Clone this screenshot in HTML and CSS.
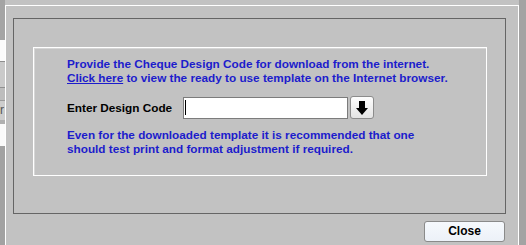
FILE: index.html
```html
<!DOCTYPE html>
<html>
<head>
<meta charset="utf-8">
<link rel="stylesheet" href="styles.css">
</head>
<body>
<div class="screen">
  <div class="side-left">
    <div class="sl sl-a"></div>
    <div class="sl sl-b"></div>
    <div class="sl sl-c"></div>
    <div class="sl sl-d"></div>
    <div class="sl sl-e"><span class="cut">r</span></div>
    <div class="sl sl-f"></div>
    <div class="sl sl-g"></div>
    <div class="sl sl-h"></div>
  </div>
  <div class="dialog-wrap">
    <div class="dialog">
      <div class="frame">
        <div class="panel">
          <div class="info">Provide the Cheque Design Code for download from the internet.<br><a class="link">Click here</a> to view the ready to use template on the Internet browser.</div>
          <div class="row">
            <span class="label">Enter Design Code</span>
            <div class="input"><span class="caret"></span></div>
            <button class="dl" type="button">
              <svg width="12" height="15" viewBox="0 0 12 15"><rect x="3" y="0" width="6" height="8" fill="#000"/><polygon points="0,7 12,7 6,14" fill="#000"/></svg>
            </button>
          </div>
          <div class="info info2">Even for the downloaded template it is recommended that one<br>should test print and format adjustment if required.</div>
        </div>
      </div>
      <div class="footer"><button class="close" type="button">Close</button></div>
    </div>
  </div>
  <div class="side-right"></div>
</div>
</body>
</html>
```
FILE: styles.css
```css
html, body {
  margin: 0;
  padding: 0;
  background: #c2c2c2;
}
.screen {
  display: flex;
  width: 526px;
  height: 245px;
  overflow: hidden;
  font-family: "Liberation Sans", Arial, sans-serif;
  font-weight: bold;
  font-size: 11.75px;
}
.side-left {
  width: 5px;
  display: flex;
  flex-direction: column;
  overflow: hidden;
}
.sl { width: 5px; }
.sl-a { height: 40px; background: #a4a4a4; }
.sl-b { height: 21px; background: #fbfbfb; }
.sl-c { height: 26px; background: #cacaca; border-top: 1px solid #8e8e8e; box-sizing: border-box; }
.sl-d { height: 13px; background: #bdbdbd; border-top: 1px solid #909090; box-sizing: border-box; }
.sl-e { height: 20px; background: #cdcdcd; border-top: 1px solid #9a9a9a; box-sizing: border-box; position: relative; }
.cut {
  position: absolute;
  right: 1px;
  top: 2px;
  font-weight: normal;
  font-size: 12px;
  color: #555;
  line-height: 14px;
}
.sl-f { height: 4px; background: #b0b0b0; }
.sl-g { height: 22px; background: #fafafa; }
.sl-h { flex: 1; background: #a2a2a2; }
.dialog-wrap {
  width: 514px;
  padding-top: 5px;
  box-sizing: border-box;
}
.dialog {
  height: 240px;
  border-top: 1px solid #fff;
  border-left: 1px solid #fff;
  border-right: 1px solid #fff;
  background: #c2c2c2;
  box-sizing: border-box;
  padding: 12px 12px 0 7px;
}
.side-right {
  width: 7px;
  background: #a3a3a3;
}
.frame {
  height: 196px;
  border: 1px solid #656565;
  box-sizing: border-box;
  padding: 28px 18px 0 19px;
}
.panel {
  height: 129px;
  border: 1px solid #fff;
  box-shadow: inset 1px 1px 0 #d6d6d6;
  box-sizing: border-box;
  padding: 9px 0 0 33px;
  color: #1c1ccc;
}
.info {
  line-height: 14px;
  white-space: nowrap;
}
.link {
  text-decoration: underline;
  color: #1c1ccc;
}
.row {
  display: flex;
  align-items: center;
  height: 23px;
  margin-top: 11px;
  color: #000;
}
.label {
  width: 116px;
  line-height: 14px;
}
.input {
  width: 165px;
  height: 22px;
  box-sizing: border-box;
  background: #fff;
  border: 1px solid #7c7c7c;
  display: flex;
  align-items: center;
  padding-left: 1px;
}
.caret {
  width: 1px;
  height: 15px;
  background: #000;
}
.dl {
  margin-left: 2px;
  width: 24px;
  height: 23px;
  box-sizing: border-box;
  border: 1px solid #8c8c8c;
  border-radius: 3px;
  background: linear-gradient(#fdfdfd, #e4e4e4);
  padding: 0;
  display: flex;
  align-items: center;
  justify-content: center;
}
.dl svg { display: block; margin-top: 1px; }
.info2 { margin-top: 9px; }
.footer {
  display: flex;
  justify-content: flex-end;
  margin-top: 7px;
  padding-right: 1px;
}
.close {
  width: 81px;
  height: 21px;
  box-sizing: border-box;
  border: 1px solid #8a8a8a;
  border-radius: 3px;
  background: linear-gradient(#f6f9fd, #ecf1f8);
  font-family: "Liberation Sans", Arial, sans-serif;
  font-weight: bold;
  font-size: 12px;
  color: #000;
  padding: 0;
  line-height: 19px;
}
```
